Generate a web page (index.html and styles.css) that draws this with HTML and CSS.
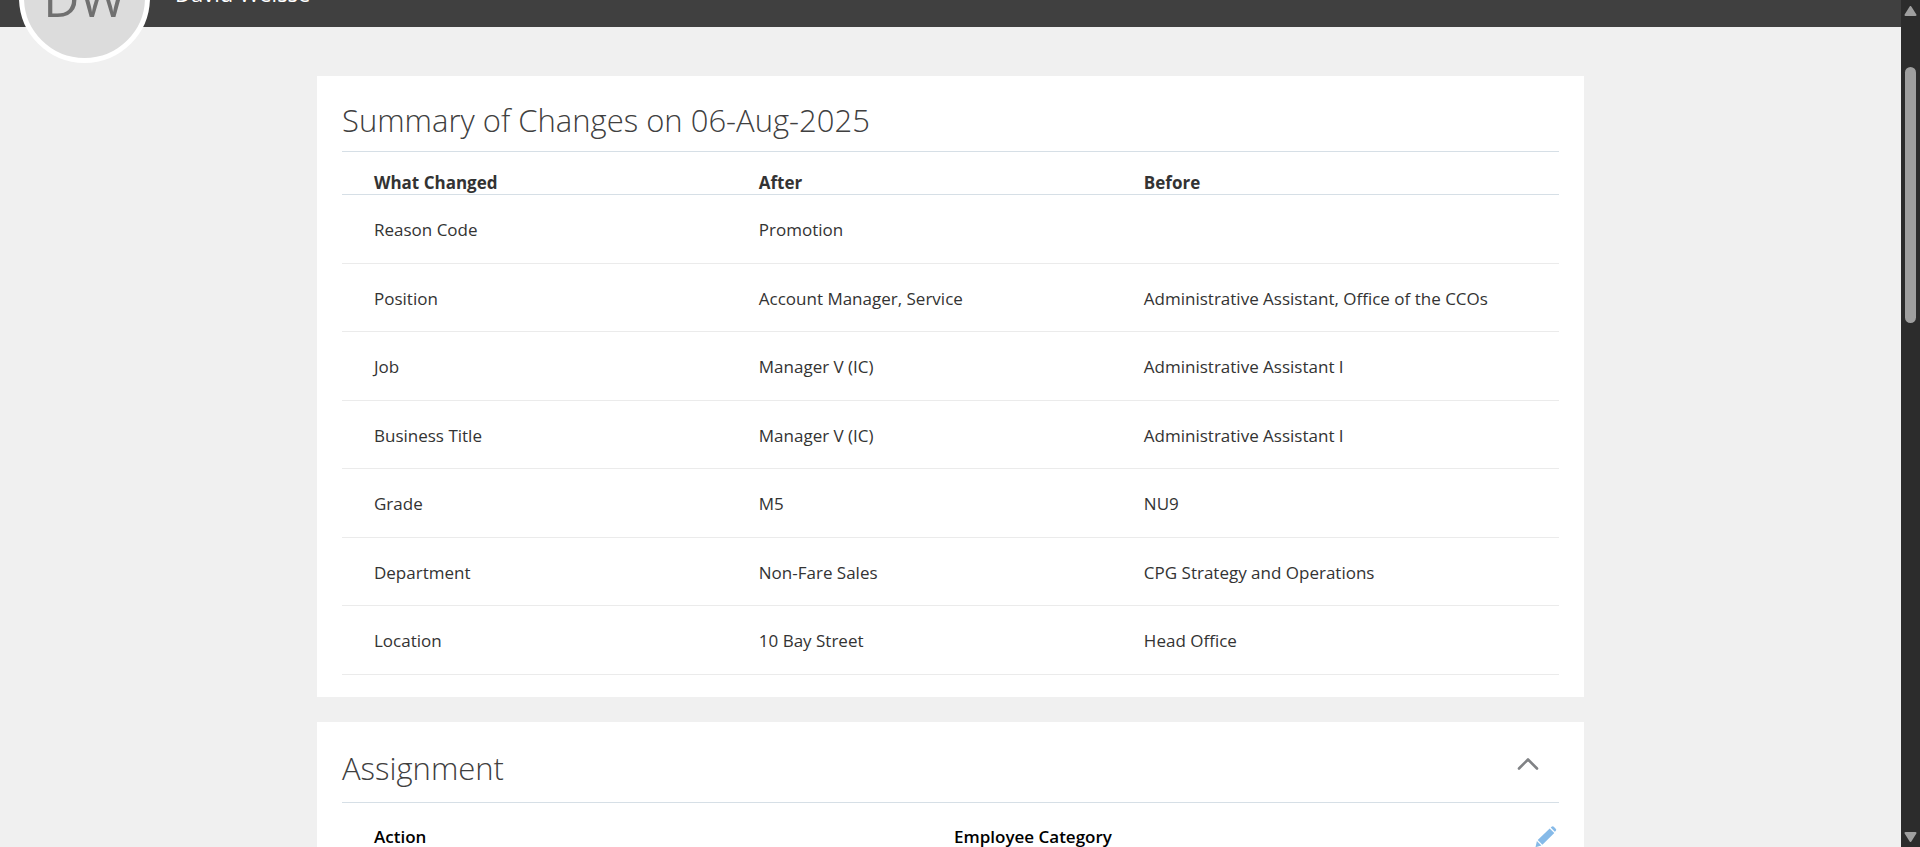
FILE: index.html
```html
<!DOCTYPE html>
<html lang="en">
<head>
<meta charset="utf-8">
<title>Summary of Changes</title>
<link rel="stylesheet" href="styles.css">
</head>
<body>
<div class="page">
  <header class="banner">
    <div class="identity">
      <div class="avatar">DW</div>
      <div class="person-name">David Weisse</div>
    </div>
  </header>
  <main class="content">
    <section class="card">
      <h1 class="card-title">Summary of Changes on 06-Aug-2025</h1>
      <table class="changes">
        <thead>
          <tr><th scope="col">What Changed</th><th scope="col">After</th><th scope="col">Before</th></tr>
        </thead>
        <tbody>
          <tr><td>Reason Code</td><td>Promotion</td><td></td></tr>
          <tr><td>Position</td><td>Account Manager, Service</td><td>Administrative Assistant, Office of the CCOs</td></tr>
          <tr><td>Job</td><td>Manager V (IC)</td><td>Administrative Assistant I</td></tr>
          <tr><td>Business Title</td><td>Manager V (IC)</td><td>Administrative Assistant I</td></tr>
          <tr><td>Grade</td><td>M5</td><td>NU9</td></tr>
          <tr><td>Department</td><td>Non-Fare Sales</td><td>CPG Strategy and Operations</td></tr>
          <tr><td>Location</td><td>10 Bay Street</td><td>Head Office</td></tr>
        </tbody>
      </table>
    </section>
    <section class="card">
      <div class="section-head">
        <h2 class="section-title">Assignment</h2>
        <button class="icon-button collapse" type="button" aria-label="Collapse Assignment">
          <svg width="22" height="14" viewBox="0 0 22 14" fill="none" stroke="#808285" stroke-width="2.6" stroke-linecap="round" stroke-linejoin="round"><path d="M2 11.5 11 2.5l9 9"/></svg>
        </button>
      </div>
      <div class="fields">
        <div class="field-label">Action</div>
        <div class="field-label">Employee Category</div>
        <button class="icon-button" type="button" aria-label="Edit Assignment">
          <svg width="22" height="22" viewBox="0 0 22 22"><path fill="#86bae8" d="M16.600.8a1.600 1.600 0 0 1 2.200 0l1.900 1.900a1.600 1.600 0 0 1 0 2.200l-.9.8-4.100-4.100zM14.700 2.500l4.600 4.600L7.400 18.700 2.700 14zM1.900 15.100 6.400 19.600.5 21.200z"/></svg>
        </button>
      </div>
    </section>
  </main>
</div>
<div class="scrollbar" aria-hidden="true">
  <svg width="13" height="10" viewBox="0 0 13 10"><path fill="#9f9f9f" stroke="#9f9f9f" stroke-width="2" stroke-linejoin="round" d="M6.500 1 11.500 9H1.500z"/></svg>
  <div class="track"><div class="thumb"></div></div>
  <svg width="13" height="10" viewBox="0 0 13 10"><path fill="#9f9f9f" stroke="#9f9f9f" stroke-width="2" stroke-linejoin="round" d="M1.500 1h10l-5 8z"/></svg>
</div>
</body>
</html>
```
FILE: styles.css
```css
* { box-sizing: border-box; }

body {
  margin: 0;
  height: 100vh;
  display: flex;
  overflow: hidden;
  background: #f0f0f0;
  color: #333;
  font: 17px/24px "Open Sans", "Noto Sans", sans-serif;
}

.page { flex: 1; min-width: 0; }

.banner {
  position: relative;
  height: 27px;
  background: #404040;
}

.identity {
  position: absolute;
  top: -68px;
  left: 19px;
  display: flex;
  align-items: center;
  gap: 25px;
}

.avatar {
  width: 131px;
  height: 131px;
  display: flex;
  align-items: center;
  justify-content: center;
  border: 5px solid #fff;
  border-radius: 50%;
  background: #dcdcdc;
  color: #707070;
  font-size: 50px;
}

.person-name { color: #fff; font-size: 22px; padding-bottom: 10px; }

.content {
  width: 66.65%;
  margin: 49px auto 0;
  display: flex;
  flex-direction: column;
  gap: 25px;
}

.card { padding: 20px 25px 22px; background: #fff; }

.card-title, .section-title {
  margin: 0;
  color: #404040;
  font-size: 31px;
  line-height: 48px;
  font-weight: 300;
}

.card-title { padding-bottom: 7px; border-bottom: 1px solid #d6dfe6; }

.changes { width: 100%; table-layout: fixed; border-collapse: separate; border-spacing: 0; }
.changes th, .changes td { padding: 0; text-align: left; }
.changes th:first-child, .changes td:first-child { width: 34.25%; padding-left: 32px; }
.changes th:nth-child(2) { width: 31.64%; }
.changes th {
  height: 43px;
  padding-top: 20px;
  border-bottom: 1px solid #d6dfe6;
  font-weight: 700;
  line-height: 22px;
}
.changes td {
  height: 69px;
  padding-top: 2px;
  border-bottom: 1px solid #ebebeb;
}
.changes tr:nth-child(even) td { height: 68px; }

.section-head {
  display: flex;
  align-items: center;
  justify-content: space-between;
  padding: 2px 20px 10px 0;
  border-bottom: 1px solid #d6dfe6;
}

.icon-button { display: flex; padding: 0; border: 0; background: none; cursor: pointer; }
.collapse { padding-bottom: 8px; }

.fields {
  display: grid;
  grid-template-columns: 580px 1fr auto;
  align-items: center;
  padding: 22px 2px 0 32px;
}

.field-label { color: #000; font-weight: 600; }

.scrollbar {
  width: 19px;
  display: flex;
  flex-direction: column;
  align-items: center;
  padding: 6px 0 5px;
  background: #2c2c2c;
}

.track { flex: 1; width: 11px; padding-top: 51px; }
.thumb { height: 33.5%; border-radius: 6px; background: #9f9f9f; }
```
